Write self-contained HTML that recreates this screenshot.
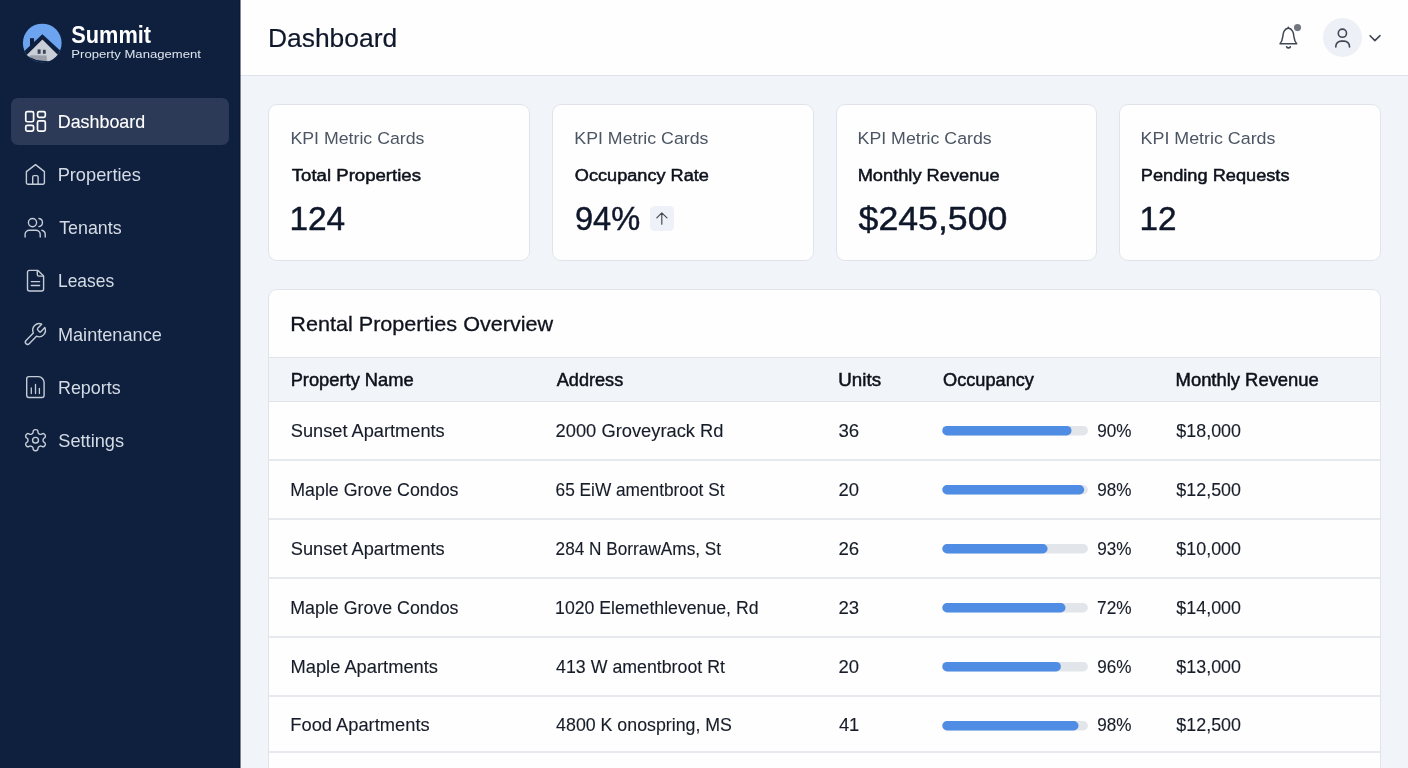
<!DOCTYPE html>
<html lang="en">
<head>
<meta charset="utf-8">
<title>Summit Property Management - Dashboard</title>
<style>
*{box-sizing:border-box;margin:0;padding:0}
html,body{width:1408px;height:768px;overflow:hidden;background:#f1f5f9}
body{position:relative;font-family:"Liberation Sans",Arial,sans-serif;-webkit-font-smoothing:antialiased}
#app{position:absolute;left:0;top:0;width:1408px;height:768px;will-change:transform;filter:grayscale(0)}
.grp{display:contents}
.tx{position:absolute;white-space:nowrap;line-height:1;display:block;transform-origin:0 0;font-weight:400;text-decoration:none}
.sidebar{position:absolute;left:0;top:0;width:240px;height:768px;background:#0e203e}
.active{position:absolute;left:11px;top:98px;width:218px;height:47px;border-radius:7px;background:#2c3a57}
.header{position:absolute;left:240px;top:0;width:1168px;height:76px;background:#fefefe;border-bottom:1px solid #dfe4ea}
.card{position:absolute;background:#fefefe;border:1px solid #e0e4ea;border-radius:9px}
.kpi{top:104px;height:157px;width:262px}
.tcard{left:268px;top:289px;width:1113px;height:500px;overflow:hidden}
.thead{position:absolute;left:0;right:0;top:67px;height:45px;background:#f1f5f9;border-top:1px solid #e1e5eb;border-bottom:1px solid #e1e5eb}
.rl{position:absolute;left:0;right:0;height:2px;background:#e6e9ed}
.ico{position:absolute;overflow:visible}
.ico path,.ico circle,.ico rect{vector-effect:non-scaling-stroke}
.badge{position:absolute;left:650px;top:206px;width:24px;height:25px;border-radius:4.5px;background:#eef2f8}
.avatar{position:absolute;left:1323px;top:18px;width:39px;height:39px;border-radius:50%;background:#edf0f6}
</style>
</head>
<body>
<div id="app">
<aside class="grp" aria-label="Sidebar">
<div class="sidebar"></div>
<div class="active"></div>
<svg class="ico" id="sideicons" style="left:0;top:0" width="240" height="768" viewBox="0 0 240 768" fill="none" stroke-linecap="round" stroke-linejoin="round">
  <!-- logo -->
  <defs><clipPath id="lc"><circle cx="42.25" cy="43" r="19.35"/></clipPath></defs>
  <circle cx="42.25" cy="43" r="19.35" fill="#6ca4f0"/>
  <g clip-path="url(#lc)">
    <polygon points="42.4,34.3 66,56 66,70 18,70 18,57" fill="#0e203e"/>
    <rect x="30" y="38.2" width="4" height="10" fill="#0e203e"/>
    <polygon points="42.4,39.5 58,54.9 51.5,61.2 37,59.9 26.2,55.4" fill="#caced6"/>
    <polygon points="31,55.2 46.5,55.6 47,60.6 37,59.9 28.5,56.3" fill="#9a9fab"/>
    <rect x="37.6" y="49.4" width="3" height="4.4" fill="#3b4558"/>
    <rect x="42.9" y="49.8" width="2.8" height="4" fill="#3b4558"/>
  </g>
  <!-- dashboard -->
  <g stroke="#ffffff" stroke-width="1.7">
    <rect x="25.75" y="111.6" width="7.85" height="10.15" rx="1.6"/>
    <rect x="37.6" y="111.6" width="7.7" height="5.7" rx="1.6"/>
    <rect x="25.75" y="125.3" width="7.85" height="5.8" rx="1.6"/>
    <rect x="37.5" y="120.9" width="7.8" height="10.2" rx="1.6"/>
  </g>
  <g stroke="#c6ccd7" stroke-width="1.4">
    <!-- home -->
    <path d="M26.4 171.6 L35.5 164.6 L44.4 171.6 V182.7 a1.5 1.5 0 0 1 -1.5 1.5 H27.9 a1.5 1.5 0 0 1 -1.5 -1.5 Z"/>
    <path d="M32.7 184.2 V177.1 a1.5 1.5 0 0 1 1.5 -1.5 h2.4 a1.5 1.5 0 0 1 1.5 1.5 V184.2"/>
    <!-- users -->
    <circle cx="32.5" cy="222.6" r="4.1"/>
    <path d="M25.1 237 V234.5 a4.3 4.3 0 0 1 4.3 -4.3 h6.5 a4.3 4.3 0 0 1 4.3 4.3 V237"/>
    <path d="M39 218.5 a4.1 4.1 0 0 1 0 8.1"/>
    <path d="M41.9 230.3 a4.3 4.3 0 0 1 3.3 4.2 V237"/>
    <!-- file -->
    <path d="M38 270.4 H29.5 a2 2 0 0 0 -2 2 V289 a2 2 0 0 0 2 2 H41.6 a2 2 0 0 0 2 -2 V276 Z"/>
    <path d="M37.3 270.6 v3.9 a1.6 1.6 0 0 0 1.6 1.6 h4.4"/>
    <path d="M31.3 281.6 H39.6 M31.3 285.5 H39.6"/>
    <!-- wrench -->
    <g id="wrench" transform="translate(22.244 321.465) scale(1.0524 1.0945)"><path d="M14.7 6.3a1 1 0 0 0 0 1.4l1.6 1.6a1 1 0 0 0 1.4 0l3.77-3.77a6 6 0 0 1-7.94 7.94l-6.91 6.91a2.12 2.12 0 0 1-3-3l6.91-6.91a6 6 0 0 1 7.94-7.94l-3.76 3.76z"/></g>
    <!-- report -->
    <path d="M38.6 376.6 H28.9 a2.2 2.2 0 0 0 -2.2 2.2 V395.3 a2.2 2.2 0 0 0 2.2 2.2 H41.9 a2.2 2.2 0 0 0 2.2 -2.2 V382.4 C44.1 379.5 41.5 376.6 38.6 376.6 Z"/>
    <path d="M31.3 388 V393.6 M35.5 384.4 V393.6 M39.4 388.5 V393.6" stroke-width="1.3"/>
    <!-- gear -->
    <g id="gear" transform="translate(22.384 427.545) scale(1.0951 1.0525)"><path d="M12.22 2h-.44a2 2 0 0 0-2 2v.18a2 2 0 0 1-1 1.73l-.43.25a2 2 0 0 1-2 0l-.15-.08a2 2 0 0 0-2.73.73l-.22.38a2 2 0 0 0 .73 2.73l.15.1a2 2 0 0 1 1 1.72v.51a2 2 0 0 1-1 1.74l-.15.09a2 2 0 0 0-.73 2.73l.22.38a2 2 0 0 0 2.73.73l.15-.08a2 2 0 0 1 2 0l.43.25a2 2 0 0 1 1 1.73V20a2 2 0 0 0 2 2h.44a2 2 0 0 0 2-2v-.18a2 2 0 0 1 1-1.73l.43-.25a2 2 0 0 1 2 0l.15.08a2 2 0 0 0 2.73-.73l.22-.39a2 2 0 0 0-.73-2.73l-.15-.08a2 2 0 0 1-1-1.74v-.5a2 2 0 0 1 1-1.74l.15-.09a2 2 0 0 0 .73-2.73l-.22-.38a2 2 0 0 0-2.73-.73l-.15.08a2 2 0 0 1-2 0l-.43-.25a2 2 0 0 1-1-1.73V4a2 2 0 0 0-2-2z"/><circle cx="12" cy="12" r="2.7"/></g>
  </g>
</svg>
<div class="grp brand">
<div class="tx" id="logo1" style="left:71px;top:23px;font-size:23.04px;color:#ffffff;font-weight:700;transform:translate(0.30px,0.70px) scaleX(0.9447);">Summit</div>
<div class="tx" id="logo2" style="left:71px;top:47px;font-size:11.74px;color:#dfe5ee;transform:translate(0.32px,0.90px) scaleX(1.1158);">Property Management</div>
</div>
<nav class="grp" aria-label="Main navigation">
<a class="tx" id="nav0" aria-current="page" style="left:57px;top:112px;font-size:18.87px;color:#ffffff;-webkit-text-stroke:0.12px #ffffff;transform:translate(0.77px,0.84px) scaleX(0.9476);">Dashboard</a>
<a class="tx" id="nav1" style="left:57px;top:165px;font-size:19.04px;color:#d5dbe5;transform:translate(0.63px,0.10px) scaleX(0.9586);">Properties</a>
<a class="tx" id="nav2" style="left:59px;top:218px;font-size:19.04px;color:#d5dbe5;transform:translate(0.13px,0.30px) scaleX(0.9386);">Tenants</a>
<a class="tx" id="nav3" style="left:57px;top:271px;font-size:19.04px;color:#d5dbe5;transform:translate(0.95px,0.40px) scaleX(0.9165);">Leases</a>
<a class="tx" id="nav4" style="left:57px;top:324px;font-size:19.04px;color:#d5dbe5;transform:translate(0.92px,0.60px) scaleX(0.9531);">Maintenance</a>
<a class="tx" id="nav5" style="left:57px;top:377px;font-size:19.04px;color:#d5dbe5;transform:translate(0.97px,0.80px) scaleX(0.9406);">Reports</a>
<a class="tx" id="nav6" style="left:58px;top:431px;font-size:19.04px;color:#d5dbe5;transform:translate(0.24px,0.00px) scaleX(0.9569);">Settings</a>
</nav>
</aside>
<header class="grp">
<div class="header"></div>
<h1 class="tx" id="title" style="left:267px;top:25px;font-size:25.73px;color:#0f172a;-webkit-text-stroke:0.2px #0f172a;transform:translate(0.96px,0.55px) scaleX(1.0268);">Dashboard</h1>
<div class="avatar"></div>
<svg class="ico" id="hdricons" style="left:1260px;top:0" width="148" height="76" viewBox="1260 0 148 76" fill="none" stroke="#414855" stroke-width="1.5" stroke-linecap="round" stroke-linejoin="round">
  <path d="M1280 43.8 C1281.8 42 1282.4 39.5 1282.75 36.9 C1283 34.5 1283.2 32.8 1284 31.4 C1285 29.6 1286.6 28.3 1288.35 28.3 C1290.1 28.3 1291.7 29.6 1292.7 31.4 C1293.5 32.8 1293.7 34.5 1293.95 36.9 C1294.3 39.5 1294.9 42 1296.7 43.8 Z"/>
  <path d="M1288.35 28.3 V27.3"/>
  <path d="M1286.7 46.8 a2 2 0 0 0 3.6 0" stroke-width="1.7"/>
  <circle cx="1297.5" cy="27.6" r="5.3" fill="#fefefe" stroke="none"/>
  <circle cx="1297.5" cy="27.6" r="3.55" fill="#71767f" stroke="none"/>
  <circle cx="1342.4" cy="33.2" r="4.1" stroke-width="1.6"/>
  <path d="M1335.8 47 V46.5 a5.4 5.4 0 0 1 5.4 -5.4 h2.9 a5.4 5.4 0 0 1 5.4 5.4 V47" stroke-width="1.6"/>
  <path d="M1370.1 35.7 L1374.9 40.6 L1380 35.7" stroke-width="1.6"/>
</svg>
<svg class="ico" style="left:238px;top:0" width="4" height="768" viewBox="238 0 4 768"><rect x="239.5" y="0" width="1" height="768" fill="#08122a"/></svg>
</header>
<main class="grp">
<section class="grp" aria-label="KPI Metric Cards">
<article class="grp">
<div class="card kpi" style="left:268px"></div>
<p class="tx" id="kl0" style="left:290px;top:129px;font-size:17.37px;color:#4b5563;transform:translate(0.46px,0.60px) scaleX(1.0215);">KPI Metric Cards</p>
<h3 class="tx" id="kn0" style="left:291px;top:167px;font-size:17.30px;color:#0d111b;-webkit-text-stroke:0.5px #0d111b;transform:translate(0.77px,0.35px) scaleX(1.0762);">Total Properties</h3>
<strong class="tx" id="kv0" style="left:289px;top:201px;font-size:33.79px;color:#0f172a;-webkit-text-stroke:0.45px #0f172a;transform:translate(0.39px,0.68px) scaleX(0.9897);">124</strong>
</article>
<article class="grp">
<div class="card kpi" style="left:552px"></div>
<p class="tx" id="kl1" style="left:574px;top:129px;font-size:17.37px;color:#4b5563;transform:translate(0.36px,0.60px) scaleX(1.0217);">KPI Metric Cards</p>
<h3 class="tx" id="kn1" style="left:574px;top:167px;font-size:17.30px;color:#0d111b;-webkit-text-stroke:0.5px #0d111b;transform:translate(0.83px,0.35px) scaleX(1.0492);">Occupancy Rate</h3>
<strong class="tx" id="kv1" style="left:574px;top:201px;font-size:33.79px;color:#0f172a;-webkit-text-stroke:0.45px #0f172a;transform:translate(0.91px,0.68px) scaleX(0.9661);">94%</strong>
<div class="badge"></div>
<svg class="ico" id="arrow" style="left:650px;top:206px" width="24" height="24" viewBox="650 206 24 24" fill="none" stroke="#454b55" stroke-width="1.2" stroke-linecap="round" stroke-linejoin="round">
  <path d="M661.8 224.2 V212.9 M656.8 217.9 L661.8 212.9 L667 217.9"/>
</svg>
</article>
<article class="grp">
<div class="card kpi" style="left:836px;width:261px"></div>
<p class="tx" id="kl2" style="left:857px;top:129px;font-size:17.37px;color:#4b5563;transform:translate(0.60px,0.60px) scaleX(1.0217);">KPI Metric Cards</p>
<h3 class="tx" id="kn2" style="left:857px;top:167px;font-size:17.30px;color:#0d111b;-webkit-text-stroke:0.5px #0d111b;transform:translate(0.66px,0.35px) scaleX(1.0559);">Monthly Revenue</h3>
<strong class="tx" id="kv2" style="left:858px;top:201px;font-size:33.79px;color:#0f172a;-webkit-text-stroke:0.45px #0f172a;transform:translate(0.53px,0.68px) scaleX(1.0566);">$245,500</strong>
</article>
<article class="grp">
<div class="card kpi" style="left:1119px"></div>
<p class="tx" id="kl3" style="left:1140px;top:129px;font-size:17.37px;color:#4b5563;transform:translate(0.57px,0.60px) scaleX(1.0282);">KPI Metric Cards</p>
<h3 class="tx" id="kn3" style="left:1140px;top:167px;font-size:17.30px;color:#0d111b;-webkit-text-stroke:0.5px #0d111b;transform:translate(0.80px,0.35px) scaleX(1.0529);">Pending Requests</h3>
<strong class="tx" id="kv3" style="left:1139px;top:201px;font-size:33.79px;color:#0f172a;-webkit-text-stroke:0.45px #0f172a;transform:translate(0.60px,0.68px) scaleX(0.9853);">12</strong>
</article>
</section>
<section class="grp" aria-label="Rental Properties Overview">
<div class="card tcard">
  <div class="thead"></div>
  <div class="rl" style="top:169px"></div>
  <div class="rl" style="top:228px"></div>
  <div class="rl" style="top:287px"></div>
  <div class="rl" style="top:346px"></div>
  <div class="rl" style="top:405px"></div>
  <div class="rl" style="top:461px"></div>
</div>
<h2 class="tx" id="ttitle" style="left:290px;top:313px;font-size:20.64px;color:#0f131d;-webkit-text-stroke:0.3px #0f131d;transform:translate(0.34px,0.65px) scaleX(1.0468);">Rental Properties Overview</h2>
<div class="grp" role="table">
<div class="grp" role="row">
<span class="tx" id="h0" role="columnheader" style="left:290px;top:370px;font-size:18.17px;color:#0d111b;-webkit-text-stroke:0.5px #0d111b;transform:translate(0.66px,0.55px) scaleX(1.0073);">Property Name</span>
<span class="tx" id="h1" role="columnheader" style="left:556px;top:370px;font-size:18.17px;color:#0d111b;-webkit-text-stroke:0.5px #0d111b;transform:translate(0.77px,0.55px) scaleX(0.9974);">Address</span>
<span class="tx" id="h2" role="columnheader" style="left:838px;top:370px;font-size:18.17px;color:#0d111b;-webkit-text-stroke:0.5px #0d111b;transform:translate(0.27px,0.55px) scaleX(1.0331);">Units</span>
<span class="tx" id="h3" role="columnheader" style="left:943px;top:370px;font-size:18.17px;color:#0d111b;-webkit-text-stroke:0.5px #0d111b;transform:translate(0.03px,0.55px) scaleX(1.0010);">Occupancy</span>
<span class="tx" id="h4" role="columnheader" style="left:1175px;top:370px;font-size:18.17px;color:#0d111b;-webkit-text-stroke:0.5px #0d111b;transform:translate(0.58px,0.55px) scaleX(1.0133);">Monthly Revenue</span>
</div>
<div class="grp" role="row">
<span class="tx" id="r0n" role="cell" style="left:290px;top:421px;font-size:18.87px;color:#161c28;-webkit-text-stroke:0.12px #161c28;transform:translate(0.76px,0.84px) scaleX(0.9662);">Sunset Apartments</span>
<span class="tx" id="r0a" role="cell" style="left:555px;top:421px;font-size:18.87px;color:#161c28;-webkit-text-stroke:0.12px #161c28;transform:translate(0.58px,0.84px) scaleX(0.9707);">2000 Groveyrack Rd</span>
<span class="tx" id="r0u" role="cell" style="left:838px;top:421px;font-size:18.87px;color:#161c28;-webkit-text-stroke:0.12px #161c28;transform:translate(0.40px,0.84px) scaleX(0.9889);">36</span>
<span class="tx" id="r0p" role="cell" style="left:1097px;top:421px;font-size:18.87px;color:#161c28;-webkit-text-stroke:0.12px #161c28;transform:translate(0.20px,0.84px) scaleX(0.9068);">90%</span>
<span class="tx" id="r0r" role="cell" style="left:1176px;top:421px;font-size:18.87px;color:#161c28;-webkit-text-stroke:0.12px #161c28;transform:translate(0.33px,0.84px) scaleX(0.9483);">$18,000</span>
</div>
<div class="grp" role="row">
<span class="tx" id="r1n" role="cell" style="left:290px;top:480px;font-size:18.87px;color:#161c28;-webkit-text-stroke:0.12px #161c28;transform:translate(0.28px,0.84px) scaleX(0.9437);">Maple Grove Condos</span>
<span class="tx" id="r1a" role="cell" style="left:555px;top:480px;font-size:18.87px;color:#161c28;-webkit-text-stroke:0.12px #161c28;transform:translate(0.53px,0.84px) scaleX(0.9159);">65 EiW amentbroot St</span>
<span class="tx" id="r1u" role="cell" style="left:838px;top:480px;font-size:18.87px;color:#161c28;-webkit-text-stroke:0.12px #161c28;transform:translate(0.50px,0.84px) scaleX(0.9781);">20</span>
<span class="tx" id="r1p" role="cell" style="left:1097px;top:480px;font-size:18.87px;color:#161c28;-webkit-text-stroke:0.12px #161c28;transform:translate(0.20px,0.84px) scaleX(0.9068);">98%</span>
<span class="tx" id="r1r" role="cell" style="left:1176px;top:480px;font-size:18.87px;color:#161c28;-webkit-text-stroke:0.12px #161c28;transform:translate(0.33px,0.84px) scaleX(0.9483);">$12,500</span>
</div>
<div class="grp" role="row">
<span class="tx" id="r2n" role="cell" style="left:290px;top:539px;font-size:18.87px;color:#161c28;-webkit-text-stroke:0.12px #161c28;transform:translate(0.76px,0.84px) scaleX(0.9662);">Sunset Apartments</span>
<span class="tx" id="r2a" role="cell" style="left:555px;top:539px;font-size:18.87px;color:#161c28;-webkit-text-stroke:0.12px #161c28;transform:translate(0.61px,0.84px) scaleX(0.9125);">284 N BorrawAms, St</span>
<span class="tx" id="r2u" role="cell" style="left:838px;top:539px;font-size:18.87px;color:#161c28;-webkit-text-stroke:0.12px #161c28;transform:translate(0.41px,0.84px) scaleX(0.9878);">26</span>
<span class="tx" id="r2p" role="cell" style="left:1097px;top:539px;font-size:18.87px;color:#161c28;-webkit-text-stroke:0.12px #161c28;transform:translate(0.20px,0.84px) scaleX(0.9068);">93%</span>
<span class="tx" id="r2r" role="cell" style="left:1176px;top:539px;font-size:18.87px;color:#161c28;-webkit-text-stroke:0.12px #161c28;transform:translate(0.33px,0.84px) scaleX(0.9483);">$10,000</span>
</div>
<div class="grp" role="row">
<span class="tx" id="r3n" role="cell" style="left:290px;top:598px;font-size:18.87px;color:#161c28;-webkit-text-stroke:0.12px #161c28;transform:translate(0.28px,0.84px) scaleX(0.9437);">Maple Grove Condos</span>
<span class="tx" id="r3a" role="cell" style="left:555px;top:598px;font-size:18.87px;color:#161c28;-webkit-text-stroke:0.12px #161c28;transform:translate(0.05px,0.84px) scaleX(0.9373);">1020 Elemethlevenue, Rd</span>
<span class="tx" id="r3u" role="cell" style="left:838px;top:598px;font-size:18.87px;color:#161c28;-webkit-text-stroke:0.12px #161c28;transform:translate(0.49px,0.84px) scaleX(0.9848);">23</span>
<span class="tx" id="r3p" role="cell" style="left:1097px;top:598px;font-size:18.87px;color:#161c28;-webkit-text-stroke:0.12px #161c28;transform:translate(0.06px,0.84px) scaleX(0.9141);">72%</span>
<span class="tx" id="r3r" role="cell" style="left:1176px;top:598px;font-size:18.87px;color:#161c28;-webkit-text-stroke:0.12px #161c28;transform:translate(0.33px,0.84px) scaleX(0.9483);">$14,000</span>
</div>
<div class="grp" role="row">
<span class="tx" id="r4n" role="cell" style="left:290px;top:657px;font-size:18.87px;color:#161c28;-webkit-text-stroke:0.12px #161c28;transform:translate(0.45px,0.64px) scaleX(0.9709);">Maple Apartments</span>
<span class="tx" id="r4a" role="cell" style="left:556px;top:657px;font-size:18.87px;color:#161c28;-webkit-text-stroke:0.12px #161c28;transform:translate(0.12px,0.64px) scaleX(0.9417);">413 W amentbroot Rt</span>
<span class="tx" id="r4u" role="cell" style="left:838px;top:657px;font-size:18.87px;color:#161c28;-webkit-text-stroke:0.12px #161c28;transform:translate(0.50px,0.64px) scaleX(0.9781);">20</span>
<span class="tx" id="r4p" role="cell" style="left:1097px;top:657px;font-size:18.87px;color:#161c28;-webkit-text-stroke:0.12px #161c28;transform:translate(0.20px,0.64px) scaleX(0.9068);">96%</span>
<span class="tx" id="r4r" role="cell" style="left:1176px;top:657px;font-size:18.87px;color:#161c28;-webkit-text-stroke:0.12px #161c28;transform:translate(0.33px,0.64px) scaleX(0.9483);">$13,000</span>
</div>
<div class="grp" role="row">
<span class="tx" id="r5n" role="cell" style="left:290px;top:716px;font-size:18.87px;color:#161c28;-webkit-text-stroke:0.12px #161c28;transform:translate(0.28px,0.34px) scaleX(0.9702);">Food Apartments</span>
<span class="tx" id="r5a" role="cell" style="left:556px;top:716px;font-size:18.87px;color:#161c28;-webkit-text-stroke:0.12px #161c28;transform:translate(0.12px,0.34px) scaleX(0.9421);">4800 K onospring, MS</span>
<span class="tx" id="r5u" role="cell" style="left:838px;top:716px;font-size:18.87px;color:#161c28;-webkit-text-stroke:0.12px #161c28;transform:translate(0.90px,0.34px) scaleX(0.9732);">41</span>
<span class="tx" id="r5p" role="cell" style="left:1097px;top:716px;font-size:18.87px;color:#161c28;-webkit-text-stroke:0.12px #161c28;transform:translate(0.20px,0.34px) scaleX(0.9068);">98%</span>
<span class="tx" id="r5r" role="cell" style="left:1176px;top:716px;font-size:18.87px;color:#161c28;-webkit-text-stroke:0.12px #161c28;transform:translate(0.33px,0.34px) scaleX(0.9483);">$12,500</span>
</div>
</div>
<svg class="ico" id="bars" style="left:930px;top:410px" width="170" height="340" viewBox="930 410 170 340">
  <rect x="942.3" y="425.9" width="145.6" height="9.5" rx="4.75" fill="#e2e5e9"/><rect x="942.3" y="425.9" width="129.2" height="9.5" rx="4.75" fill="#4f8ce4"/>
  <rect x="942.3" y="485.0" width="145.6" height="9.5" rx="4.75" fill="#e2e5e9"/><rect x="942.3" y="485.0" width="141.9" height="9.5" rx="4.75" fill="#4f8ce4"/>
  <rect x="942.3" y="544.0" width="145.6" height="9.5" rx="4.75" fill="#e2e5e9"/><rect x="942.3" y="544.0" width="105.3" height="9.5" rx="4.75" fill="#4f8ce4"/>
  <rect x="942.3" y="603.0" width="145.6" height="9.5" rx="4.75" fill="#e2e5e9"/><rect x="942.3" y="603.0" width="123.2" height="9.5" rx="4.75" fill="#4f8ce4"/>
  <rect x="942.3" y="661.9" width="145.6" height="9.5" rx="4.75" fill="#e2e5e9"/><rect x="942.3" y="661.9" width="118.6" height="9.5" rx="4.75" fill="#4f8ce4"/>
  <rect x="942.3" y="721.0" width="145.6" height="9.5" rx="4.75" fill="#e2e5e9"/><rect x="942.3" y="721.0" width="136.2" height="9.5" rx="4.75" fill="#4f8ce4"/>
</svg>
</section>
</main>
</div>
</body>
</html>
